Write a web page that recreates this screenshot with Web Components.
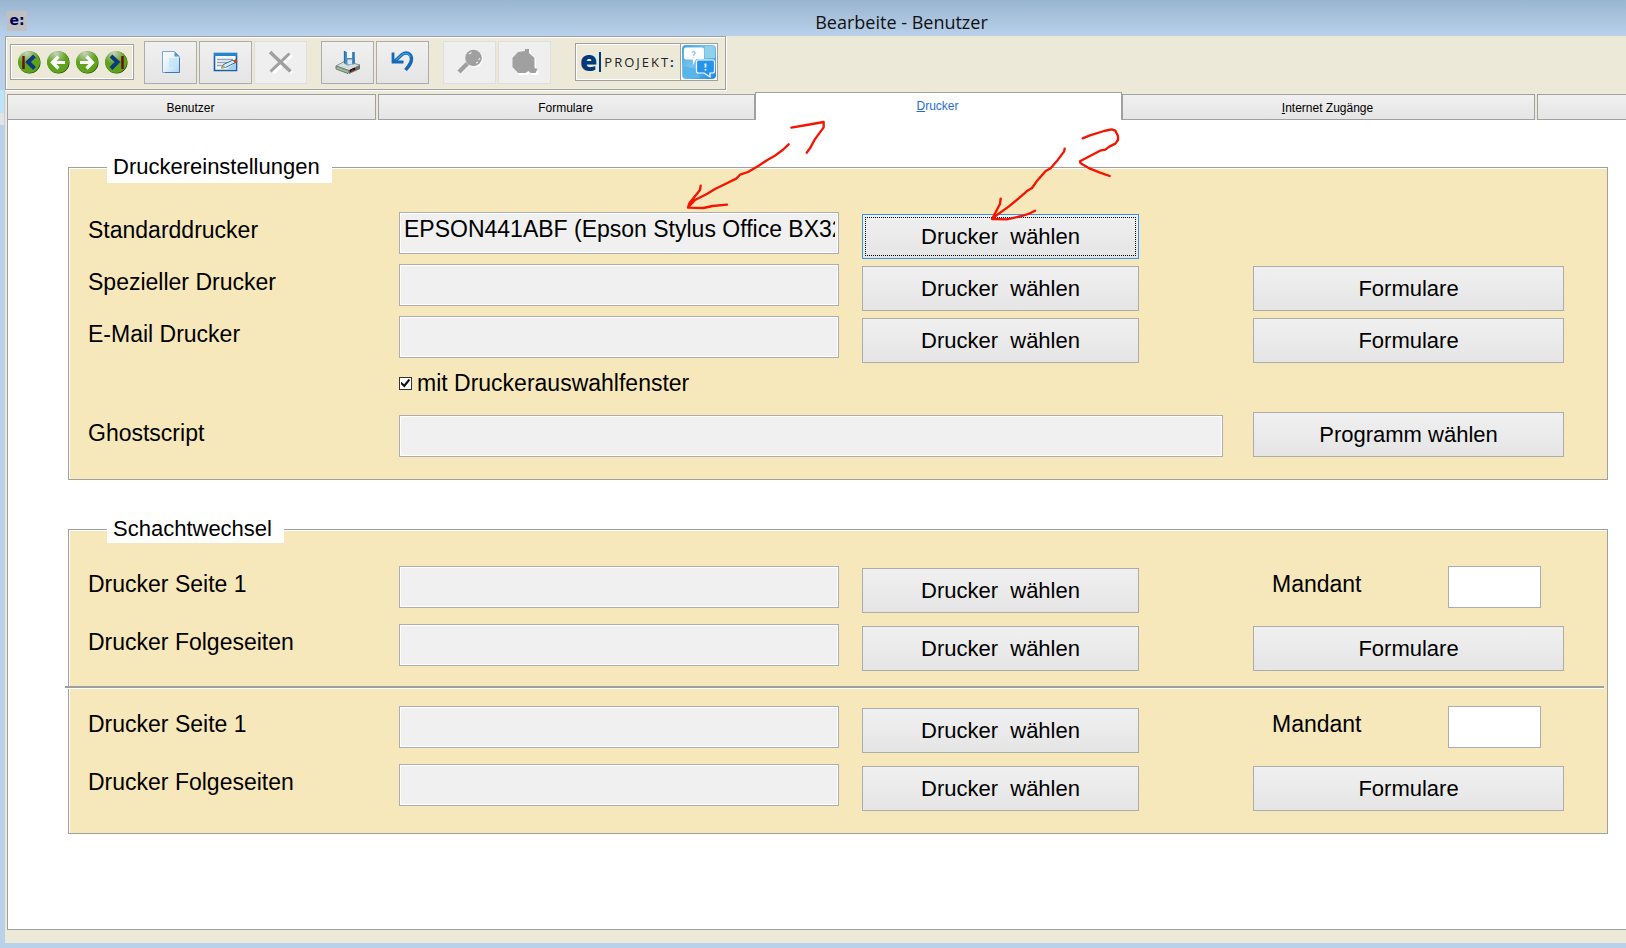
<!DOCTYPE html>
<html lang="de">
<head>
<meta charset="utf-8">
<title>Bearbeite - Benutzer</title>
<style>
  html, body { margin: 0; height: 100%; }
  body { font-family: "Liberation Sans", Arial, sans-serif; color: #000; overflow: hidden; background: #b9d1ea; }
</style>
</head>
<body>
<app-window heading="Bearbeite - Benutzer">
  <tool-bar slot="toolbar"></tool-bar>
  <tab-strip slot="tabs"></tab-strip>

  <group-box caption="Druckereinstellungen" class="settings">
    <printer-row label="Standarddrucker" value="EPSON441ABF (Epson Stylus Office BX320FW)" focused></printer-row>
    <printer-row label="Spezieller Drucker"><push-button slot="extra">Formulare</push-button></printer-row>
    <printer-row label="E-Mail Drucker"><push-button slot="extra">Formulare</push-button></printer-row>
    <check-row label="mit Druckerauswahlfenster"></check-row>
    <program-row label="Ghostscript" action="Programm wählen"></program-row>
  </group-box>

  <group-box caption="Schachtwechsel" class="trays">
    <printer-row label="Drucker Seite 1"><client-field slot="extra"></client-field></printer-row>
    <printer-row label="Drucker Folgeseiten"><push-button slot="extra">Formulare</push-button></printer-row>
    <group-divider></group-divider>
    <printer-row label="Drucker Seite 1"><client-field slot="extra"></client-field></printer-row>
    <printer-row label="Drucker Folgeseiten"><push-button slot="extra">Formulare</push-button></printer-row>
  </group-box>

  <ink-notes slot="ink"></ink-notes>
</app-window>

<script>
const define = (name, render) => customElements.define(name, class extends HTMLElement {
  connectedCallback() {
    if (this.shadowRoot) return;
    this.attachShadow({ mode: 'open' }).innerHTML = render(this);
  }
});

const controlCss = `
  *, *::before, *::after { box-sizing: border-box; }
  label { font-size: 23px; line-height: 26px; white-space: nowrap; }
  input[type=text] {
    display: block; width: 100%; height: 42px; margin: 0; padding: 3px 3px 11px 4px; border: 1px solid #abadb3;
    border-radius: 0; background: #f0f0f0; box-shadow: inset 0 0 0 1px #fff;
    font: 23px/26px "Liberation Sans", Arial, sans-serif; color: #000; outline: none;
  }
  button {
    display: block; width: 100%; height: 45px; margin: 0; padding: 0; border: 1px solid #acacac; border-radius: 0;
    background: linear-gradient(#f0f0f0, #e5e5e5); color: #000;
    font: 22px/26px "Liberation Sans", Arial, sans-serif; white-space: pre; text-align: center;
  }
  button.focused { border-color: #3393ee; outline: 1px dotted #000; outline-offset: -4px; }
`;
const rowCss = `
  :host { display: grid; align-items: start;
    grid-template-columns: minmax(0, 311fr) minmax(0, 440fr) 23px minmax(0, 277fr) minmax(0, 114fr) minmax(0, 311fr); }
  label { grid-column: 1; padding-top: 5px; }
`;

define('app-window', el => `
  <style>
    :host { display: flex; flex-direction: column; position: relative; min-height: 100vh; box-sizing: border-box;
      padding: 0 0 5px 5px; overflow: hidden;
      background: linear-gradient(#bfe4f8, #bfe4f8) 0 90px / 4px 23px no-repeat,
        linear-gradient(#e4e4e4, #e4e4e4) 0 113px / 4px 12px no-repeat,
        linear-gradient(#9ab5d1, #b9d1ea 36px); }
    header { display: flex; align-items: center; height: 36px; }
    .badge { flex: none; width: 20px; height: 20px; margin: 6px 0 0 2px; background: #c0c0c0; color: #00005a;
      font: bold 14px/18px "DejaVu Sans", sans-serif; text-align: center; }
    h1 { flex: 1; margin: 8px 0 0; padding-left: 150px; font: 18px/26px "Open Sans", sans-serif; text-align: center; color: #111; }
    .client { flex: 1; display: flex; flex-direction: column; background: #ece9d8; padding: 0 0 13px 2px; }
    .bar { margin-left: -2px; }
    main { flex: 1; background: #fff; border-left: 1px solid #a0a0a0; border-bottom: 1px solid #a0a0a0;
      padding: 31px 18px 35px 60px; display: flex; flex-direction: column; gap: 35px; }
  </style>
  <header><span class="badge">e:</span><h1>${el.getAttribute('heading')}</h1></header>
  <div class="client">
    <div class="bar"><slot name="toolbar"></slot></div>
    <slot name="tabs"></slot>
    <main><slot></slot></main>
  </div>
  <slot name="ink"></slot>`);

const ball = (id, inner) => `
  <svg width="24" height="24" viewBox="0 0 24 24" aria-hidden="true">
    <defs><radialGradient id="${id}" cx=".4" cy=".1" r=".5"><stop offset="0" stop-color="#c9d3bd"/><stop offset="1" stop-color="#5fa31c"/></radialGradient></defs>
    <circle cx="12.500" cy="12.500" r="11" fill="#173f0a"/><circle cx="12" cy="12" r="11" fill="url(#${id})"/>${inner}
  </svg>`;
const navIcons = [
  ['Erster', ball('b1', '<path d="M6.500 6v13" stroke="#6e0c0c" stroke-width="2.400"/><path d="M17.500 6L11 12l6.500 6.500" fill="none" stroke="#0b3a7c" stroke-width="4"/>')],
  ['Zurück', ball('b2', '<path d="M19 12.500H7M12.500 6.500l-6 6 6 6" fill="none" stroke="#fff" stroke-width="3.200"/>')],
  ['Weiter', ball('b3', '<path d="M5 12.500h12M11.500 6.500l6 6-6 6" fill="none" stroke="#fff" stroke-width="3.200"/>')],
  ['Letzter', ball('b4', '<path d="M18.500 6v13" stroke="#6e0c0c" stroke-width="2.400"/><path d="M7 6l6.500 6L7 18.500" fill="none" stroke="#0b3a7c" stroke-width="4"/>')]
];
const icons = {
  page: `<svg width="24" height="24" viewBox="0 0 24 24"><defs><linearGradient id="pg" x2="1" y2="1"><stop offset="0" stop-color="#fff"/><stop offset=".5" stop-color="#e3f1fb"/><stop offset="1" stop-color="#a8d5f5"/></linearGradient></defs>
    <path d="M3.500 1.500h12l5 5v16h-17z" fill="url(#pg)" stroke="#7fa6cc"/><path d="M10 8h9v9h-9z" fill="#c0e2f8" opacity=".7"/><path d="M15.500 1.500v5h5z" fill="#5f95c9"/><path d="M20.500 8v14.500H6" fill="none" stroke="#3f78b4"/></svg>`,
  edit: `<svg width="26" height="24" viewBox="0 0 26 24"><path d="M1.500 3.500h22v17h-22z" fill="#f4fafe" stroke="#1a5f9e" stroke-width="1.600"/><path d="M1 3h23v3H1z" fill="#1f86cf"/>
    <path d="M4 9.500h16M4 12.500h14M4 15.500h8" stroke="#9aa4aa" stroke-width="1.300"/><path d="M13 19.500h10v-7z" fill="#9fd0f3"/><path d="M8.500 18l2-3.500L20 10l2.500 2.500-10 5z" fill="#d8ecfa" stroke="#2572b5"/><path d="M8 18.500l2.500-3.500 2 2.500z" fill="#e8a33c"/><path d="M20 10.500l3-1.500 1.500 2.500-2.500 2z" fill="#c8481c"/></svg>`,
  cross: `<svg width="26" height="26" viewBox="0 0 26 26" fill="none"><path d="M4 4.500l20 19.500M24 6L5.500 24" stroke="#fff" stroke-width="3.500"/><path d="M2 3l20.500 19.500" stroke="#a0a0a0" stroke-width="3.600"/><path d="M21.500 4.500L2.500 22.500" stroke="#a0a0a0" stroke-width="3"/></svg>`,
  save: `<svg width="26" height="26" viewBox="0 0 26 26"><path d="M1 17l9-5 15 4-11 6z" fill="#dcdedb" stroke="#8b918c"/><path d="M1 17v3l12 4.500 1-3z" fill="#aeb5b0" stroke="#6d756f"/><path d="M14 21.500V25l11-5v-4z" fill="#66706a"/><path d="M15 22l5-2.500" stroke="#111" stroke-width="2.500"/><path d="M16.500 22l2-1" stroke="#d01818" stroke-width="1.600"/><path d="M5 19l6 2.500" stroke="#59c062"/>
    <path d="M9 2l3 1h7l1 12-7 1.500-4-2z" fill="#4a8fc4"/><path d="M12 1h5v8h-5z" fill="#f3f8fb"/><path d="M12.500 10.500h4.500v5h-4.500z" fill="#d7e5ee"/><path d="M9.500 2v12M19 3v11" stroke="#2d6c9f" stroke-width="1.300"/></svg>`,
  undo: `<svg width="26" height="26" viewBox="0 0 26 26"><path d="M4.500 12.500L12 5.500C16 2.500 21 4 21.500 9.500C21.700 14 19 17 15.500 21" fill="none" stroke="#1769b8" stroke-width="3.400"/><path d="M3 3.500v9.500H13.500" fill="none" stroke="#1769b8" stroke-width="2.800"/><path d="M6 11l6.500-6C16 3.500 19.500 4.500 20.500 8" fill="none" stroke="#3d9be6" stroke-width="1.300"/></svg>`,
  search: `<svg width="26" height="26" viewBox="0 0 26 26"><g transform="translate(1 1)" fill="#fff" stroke="#fff"><circle cx="16.500" cy="9" r="8"/><path d="M10 14l-8 8" stroke-width="4.500"/></g><circle cx="16.500" cy="9" r="8.300" fill="#a0a0a0"/><path d="M10.500 14.500L2 23" stroke="#a0a0a0" stroke-width="4.500"/><path d="M12 5l2.500-1.500M21.500 11l1.500-2M19 14l2-1" stroke="#efefef" stroke-width="1.200"/></svg>`,
  shape: `<svg width="28" height="26" viewBox="0 0 28 26"><path d="M8 3l6-1V0h5v4l5 5v10l2 2h1l-1 4h-6l-2-2-3 2H7l-5-6V8z" fill="#fff" transform="translate(1 1)"/><path d="M7 3l7-1V0h4v4l5.500 5v10l3 1-2 4h-5l-2-2-3 2H7l-5.500-6V9z" fill="#a0a0a0"/></svg>`,
  chat: `<svg width="34" height="34" viewBox="0 0 34 34"><defs><linearGradient id="ch" x2="1" y2="1"><stop offset="0" stop-color="#3fa3dd"/><stop offset=".45" stop-color="#7cc4ec"/><stop offset="1" stop-color="#1489e0"/></linearGradient></defs>
    <rect width="34" height="34" rx="4" fill="url(#ch)"/><path d="M23 1h7q3 0 3 3v9H23z" fill="#8fd0ea"/><path d="M1 21l13 3 4 9H4q-3 0-3-3z" fill="#57b5ea"/>
    <path d="M4 2.500h16q2 0 2 2V14h-8l-3 6v-5.500H4q-2 0-2-2v-8q0-2 2-2z" fill="#fff"/><path d="M16.500 15h14q2 0 2 2v9q0 2-2 2h-2.500v4l-6-4h-5.500q-2 0-2-2v-9q0-2 2-2z" fill="#2594ea" stroke="#fff" stroke-width="1.200"/>
    <path d="M10 7.500q2-2 3 0c.5 1.500-1.500 1.500-1.500 3.500M11.500 12v1" fill="none" stroke="#9ecdea" stroke-width="1.500"/><path d="M23.500 18.500v4M23.500 24v1.500" stroke="#fff" stroke-width="1.800"/></svg>`
};
const toolButton = (icon, title, off) => `<button title="${title}" aria-label="${title}"${off ? ' disabled' : ''}>${icons[icon]}</button>`;

define('tool-bar', () => `
  <style>
    *, *::before { box-sizing: border-box; }
    :host { display: block; height: 56px; }
    .frame { display: inline-flex; align-items: center; height: 54px; padding: 0 7px 2px 4px; vertical-align: top;
      border: 1px solid #a0a0a0; box-shadow: inset 1px 1px #fff, 1px 1px #fff; }
    .nav { display: flex; align-items: center; gap: 5px; height: 36px; width: 124px; padding-left: 6px; margin-right: 10px;
      border: 1px solid #a0a0a0; box-shadow: inset 1px 1px #fff, inset -1px -1px #fff; }
    button { display: grid; place-items: center; border: 0; padding: 0; margin: 0; background: none; }
    .nav button { width: 24px; height: 24px; }
    .tools { display: flex; gap: 2px; }
    .tools + .tools { margin-left: 14px; }
    .tools button { width: 53px; height: 43px; border: 1px solid #acacac; background: linear-gradient(#f0f0f0, #e5e5e5); }
    .tools button:disabled { background: #efefef; border-color: #dedede; }
    .logo { display: flex; align-items: center; height: 38px; margin-left: 24px; padding-left: 4px;
      border: 1px solid #a0a0a0; box-shadow: inset 1px 1px #fff, inset -1px -1px #fff; color: #003a7a;
      font-family: "Open Sans", sans-serif; }
    .logo b { font-size: 28px; line-height: 30px; font-weight: 800; margin-top: -5px; }
    .logo i { width: 2px; height: 20px; background: #003a7a; margin: 0 3px 0 2px; }
    .logo span { width: 76px; font-size: 13px; line-height: 20px; letter-spacing: 2px; color: #222; white-space: nowrap; }
    .logo em { font-style: normal; font-weight: bold; color: #003a7a; letter-spacing: 0; }
    .logo button { height: 36px; width: 37px; border-left: 1px solid #a0a0a0; background: #fff; }
  </style>
  <div class="frame">
    <div class="nav">${navIcons.map(([t, s]) => `<button title="${t}" aria-label="${t}">${s}</button>`).join('')}</div>
    <div class="tools">${toolButton('page', 'Neu')}${toolButton('edit', 'Bearbeiten')}${toolButton('cross', 'Löschen', true)}</div>
    <div class="tools">${toolButton('save', 'Speichern')}${toolButton('undo', 'Rückgängig')}</div>
    <div class="tools">${toolButton('search', 'Suchen', true)}${toolButton('shape', 'Auswahl', true)}</div>
    <div class="logo"><b>e</b><i></i><span>PROJEKT<em>:</em></span><button title="Hilfe" aria-label="Hilfe">${icons.chat}</button></div>
  </div>`);

define('tab-strip', () => `
  <style>
    :host { display: grid; column-gap: 2px; align-items: end; height: 28px;
      grid-template-columns: minmax(0, 369fr) minmax(0, 377fr) minmax(0, 363fr) minmax(0, 413fr) minmax(0, 89fr); }
    button { box-sizing: border-box; height: 26px; margin: 0; padding: 2px 2px 0 0; border: 1px solid #a0a0a0; border-radius: 0;
      background: linear-gradient(#f0f0f0, #e5e5e5); color: #000; font: 12px/16px "Liberation Sans", Arial, sans-serif; }
    button[aria-selected=true] { height: 28px; margin: 0 -2px; padding-bottom: 4px; border-bottom: 0; background: #fff; color: #1f6fd6; }
    button:last-child { border-right: 0; }
  </style>
  <button role="tab">Benutzer</button><button role="tab">Formulare</button>
  <button role="tab" aria-selected="true"><u>D</u>rucker</button>
  <button role="tab"><u>I</u>nternet Zugänge</button><button role="tab" aria-label="Weitere"></button>`);

define('group-box', el => `
  <style>
    :host { display: block; --gap: 5px; --top: 29px; --legend: 32px; }
    :host(.trays) { --gap: 11px; --top: 23px; --legend: 28px; }
    fieldset { box-sizing: border-box; min-width: 0; margin: 0; padding: 0 43px 22px 19px; border: 1px solid #a0a0a0;
      background: #f7e8bb; box-shadow: inset 1px 1px #fff; }
    legend { margin-left: 19px; padding: 0 12px 0 6px; background: #fff; font-size: 22px; line-height: var(--legend); }
    .rows { display: flex; flex-direction: column; gap: var(--gap); padding-top: var(--top); }
  </style>
  <fieldset><legend>${el.getAttribute('caption')}</legend><div class="rows"><slot></slot></div></fieldset>`);

define('push-button', () => `
  <style>${controlCss} :host { display: block; }</style><button><slot></slot></button>`);

define('printer-row', el => `
  <style>${controlCss}${rowCss}
    input { grid-column: 2; }
    .pick { grid-column: 4; margin-top: 2px; }
    .extra { grid-column: 6; }
    ::slotted(push-button) { margin-top: 2px; }
  </style>
  <label for="f">${el.getAttribute('label')}</label>
  <input id="f" type="text" readonly value="${el.getAttribute('value') || ''}">
  <button class="pick${el.hasAttribute('focused') ? ' focused' : ''}">Drucker  wählen</button>
  <div class="extra"><slot name="extra"></slot></div>`);

define('client-field', () => `
  <style>${controlCss}
    :host { display: flex; justify-content: space-between; align-items: flex-start; padding: 0 23px 0 19px; }
    label { padding-top: 5px; }
    input[type=text] { width: 93px; background: #fff; }
  </style>
  <label for="m">Mandant</label><input id="m" type="text">`);

define('check-row', el => `
  <style>${controlCss}${rowCss}
    :host { padding: 2px 0 11px; }
    label { grid-column: 2; padding: 0; display: flex; align-items: center; gap: 5px; }
    input { appearance: none; flex: none; width: 13px; height: 13px; margin: 0; border: 1px solid #333; background: #fff; display: grid; place-items: center; }
    input:checked::before { content: ""; width: 9px; height: 9px; background: #111;
      clip-path: polygon(0 35%, 35% 65%, 88% 0, 100% 22%, 38% 100%, 0 65%); }
  </style>
  <label><input type="checkbox" checked>${el.getAttribute('label')}</label>`);

define('program-row', el => `
  <style>${controlCss}${rowCss}
    label { padding-top: 8px; }
    .field { grid-column: 2 / 6; padding: 3px 30px 0 0; }
    button { grid-column: 6; }
  </style>
  <label for="p">${el.getAttribute('label')}</label>
  <div class="field"><input id="p" type="text" readonly></div>
  <button>${el.getAttribute('action')}</button>`);

define('group-divider', () => `
  <style>:host { display: block; height: 3px; margin: 4px -40px 6px -23px; background: linear-gradient(#a0a0a0 2px, #fff 2px); }</style>`);

/* Hand-drawn arrows laid over the form. */
define('ink-notes', () => `
  <style>
    :host { position: absolute; left: 660px; top: 100px; width: 500px; height: 170px; pointer-events: none; }
    svg { display: block; width: 100%; height: 100%; }
  </style>
  <svg viewBox="0 0 1500 510" fill="none" stroke="#f51400" stroke-width="7" stroke-linecap="round" stroke-linejoin="round" aria-hidden="true">
    <path d="M386 133L368 150 342 169 322 180 296 197 264 216 240 224 230 235 196 252 165 267 142 281 105 300 86 320M122 257L120 270 88 310 84 323 130 324 158 318 201 314"/>
    <path d="M394 83L440 75 491 66 491 82 464 119 450 145 440 158"/>
    <path d="M1214 146L1212 155 1190 184 1172 205 1157 213 1130 244 1116 264 1100 274 1076 295 1046 320 998 354M1022 296L1020 312 996 357 1040 358 1086 348 1110 340 1125 332"/>
    <path d="M1268 115L1290 106 1332 93 1355 88 1366 92 1374 108 1374 120 1366 131 1348 140 1336 149 1320 152 1290 168 1260 184 1262 190 1290 206 1320 218 1349 228"/>
  </svg>`);
</script>
</body>
</html>
